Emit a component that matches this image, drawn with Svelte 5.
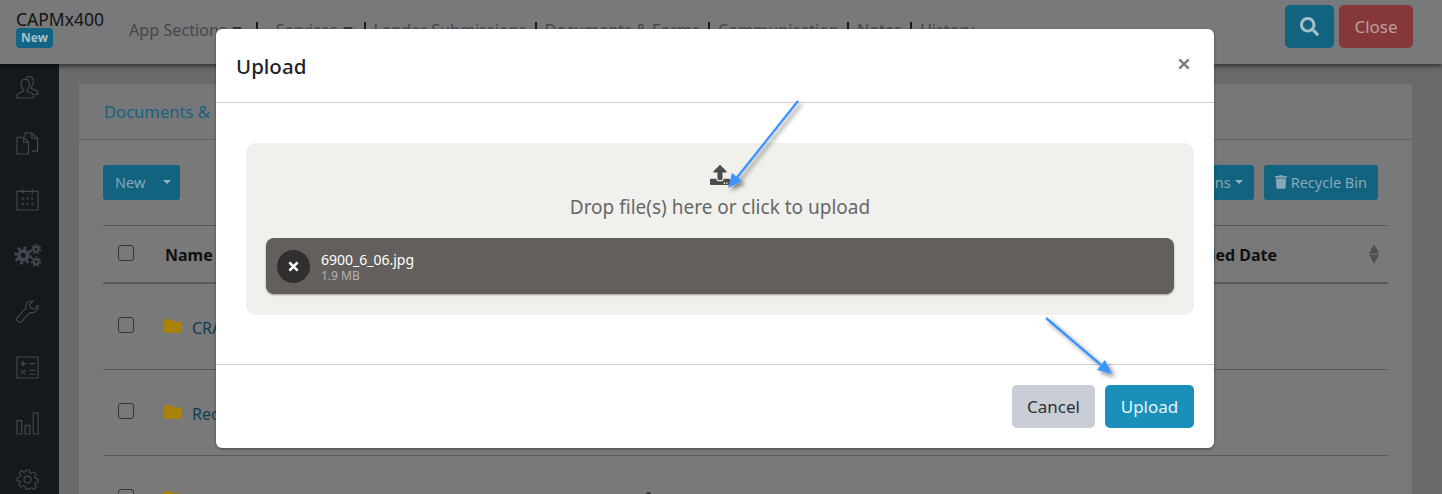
<script lang="ts">
	const navItems = [
		{ label: 'App Sections', caret: true },
		{ label: 'Services', caret: true },
		{ label: 'Lender Submissions' },
		{ label: 'Documents & Forms' },
		{ label: 'Communication' },
		{ label: 'Notes' },
		{ label: 'History' }
	];

	const rows = ['CRA Documents', 'Recent Uploads', 'OUR DEMO FOLDER'];

	const folderPath =
		'M464 128H272l-64-64H48C21.49 64 0 85.49 0 112v288c0 26.51 21.49 48 48 48h416c26.51 0 48-21.49 48-48V176c0-26.51-21.49-48-48-48z';
</script>

<div class="page">
	<header class="topbar">
		<div class="brand">
			<span class="brand-name">CAPMx400</span>
			<span class="badge">New</span>
		</div>
		<nav class="nav">
			{#each navItems as item, i}
				{#if i > 0}<span class="nav-sep"></span>{/if}
				<span class="nav-item" class:has-caret={item.caret}>{item.label}{#if item.caret}<span class="caret-lg"></span>{/if}</span>
			{/each}
		</nav>
		<div class="top-actions">
			<button class="btn-search" aria-label="Search">
				<svg viewBox="0 0 512 512" width="19" height="19">
					<path fill="currentColor" d="M505 442.7L405.3 343c-4.5-4.5-10.6-7-17-7H372c27.6-35.3 44-79.7 44-128C416 93.1 322.9 0 208 0S0 93.1 0 208s93.1 208 208 208c48.3 0 92.7-16.4 128-44v16.3c0 6.4 2.5 12.5 7 17l99.7 99.7c9.4 9.4 24.6 9.4 33.9 0l28.3-28.3c9.4-9.4 9.4-24.6.1-34zM208 336c-70.7 0-128-57.2-128-128 0-70.7 57.2-128 128-128 70.7 0 128 57.2 128 128 0 70.7-57.2 128-128 128z" />
				</svg>
			</button>
			<button class="btn-close">Close</button>
		</div>
	</header>

	<div class="main">
		<aside class="sidebar">
			<!-- users -->
			<svg viewBox="0 0 24 24" class="side-icon">
				<path d="M1 23v-2.500c0-1.500 1-2.300 3-3l3.500-1.300v-2.200c-1.500-1.200-2.200-3-2.200-5.200C5.300 5 7 3.200 9.600 3.200S14 5 14 8.800c0 2.200-.8 4-2.200 5.200v2.200l3.600 1.300c2 .7 3 1.500 3 3V23z" />
				<path d="M11 1.500c.8-.6 1.700-.8 2.800-.8 2.700 0 4.400 1.900 4.400 5.400 0 2.200-.7 3.900-2.100 5v2.200l3.500 1.200c2.200.8 3.400 1.600 3.400 3.100v1.600h-3.500" />
			</svg>
			<!-- documents -->
			<svg viewBox="0 0 24 24" class="side-icon">
				<path d="M1 5.500h7l5 5V23H1z" />
				<path d="M8 5.500v5h5" />
				<path d="M9.500 5V1h7l6 5.500V20H16.500" />
				<path d="M16.500 1v5.500h6" />
			</svg>
			<!-- calendar -->
			<svg viewBox="0 0 24 24" class="side-icon">
				<path d="M1 3.500h22V23H1zM7 1v5M17 1v5" />
				<path class="dots" d="M6 10h2v2H6zM11 10h2v2h-2zM16 10h2v2h-2zM6 16h2v2H6zM11 16h2v2h-2zM16 16h2v2h-2z" />
			</svg>
			<!-- gears -->
			<svg viewBox="0 0 30 24" class="side-icon gears">
				<circle class="gear" cx="10" cy="12" r="6.500" />
				<circle class="gear-teeth" cx="10" cy="12" r="8" />
				<circle class="gear-hole" cx="10" cy="12" r="2.600" />
				<circle class="gear" cx="23.500" cy="5.500" r="3.600" />
				<circle class="gear-teeth small" cx="23.500" cy="5.500" r="4.500" />
				<circle class="gear-hole" cx="23.500" cy="5.500" r="1.500" />
				<circle class="gear" cx="23.500" cy="18.500" r="3.600" />
				<circle class="gear-teeth small" cx="23.500" cy="18.500" r="4.500" />
				<circle class="gear-hole" cx="23.500" cy="18.500" r="1.500" />
			</svg>
			<!-- wrench -->
			<svg viewBox="0 0 24 24" class="side-icon">
				<path d="M15.500 1c-3.700.2-6 3.500-5 7.500L1.200 18.500c-.8.900-.8 2.200 0 3l1.300 1.300c.9.800 2.200.8 3-.1l9.500-9.700c4.200 1 7.800-1.500 8-5.800l-.2-1.400-3.800 3.700-4-1-1-3.800L17.800 1.300z" />
			</svg>
			<!-- calculator -->
			<svg viewBox="0 0 24 24" class="side-icon">
				<path d="M1 1h22v22H1z" />
				<path d="M4.500 8h6M7.500 5v6M14 8h6M5 14.500l5 5M10 14.500l-5 5M14 15h6M14 19h6" />
			</svg>
			<!-- bars -->
			<svg viewBox="0 0 24 24" class="side-icon">
				<path d="M1 9h5v14H1zM9.500 14h5v9h-5zM18 1h5v22h-5z" />
			</svg>
			<!-- settings -->
			<svg viewBox="0 0 24 24" class="side-icon">
				<circle cx="12" cy="12" r="3.600" />
				<path d="M10 1h4l.6 3.200 2 .9 2.700-1.900 2.800 2.800-1.900 2.700.9 2 3.200.6v4l-3.200.6-.9 2 1.900 2.700-2.800 2.800-2.700-1.900-2 .9L14 23h-4l-.6-3.200-2-.9-2.700 1.900-2.800-2.800 1.900-2.700-.9-2L0 14v-4l3.200-.6.9-2L2.200 4.700 5 1.900l2.700 1.900 2-.9z" transform="translate(1.100 1.100) scale(.91)" />
			</svg>
		</aside>

		<section class="card">
			<div class="card-head">
				<span class="card-tab">Documents &amp; Forms</span>
			</div>
			<div class="card-body">
				<div class="toolbar">
					<span class="tb-btn tb-new">New<span class="caret-sm"></span></span>
					<span class="spacer"></span>
					<span class="tb-btn">Actions<span class="caret-sm tight"></span></span>
					<span class="tb-btn">
						<svg viewBox="0 0 448 512" width="12" height="14">
							<path fill="currentColor" d="M432 32H312l-9.400-18.700A24 24 0 0 0 281.100 0H166.800a23.720 23.720 0 0 0-21.400 13.300L136 32H16A16 16 0 0 0 0 48v32a16 16 0 0 0 16 16h416a16 16 0 0 0 16-16V48a16 16 0 0 0-16-16zM53.200 467a48 48 0 0 0 47.900 45h245.800a48 48 0 0 0 47.900-45L416 128H32z" />
						</svg>
						Recycle Bin
					</span>
				</div>
				<div class="table">
					<div class="row head-row">
						<span class="check"></span>
						<span class="col-name">Name</span>
						<span class="col-date">Modified Date</span>
						<svg class="sort" viewBox="0 0 10 20" width="10" height="20">
							<path d="M5 0l5 9.500H0zM5 20l-5-9.500h10z" />
						</svg>
					</div>
					{#each rows as row}
						<div class="row">
							<span class="check"></span>
							<svg class="folder" viewBox="0 0 512 512" width="18" height="18">
								<path fill="currentColor" d={folderPath} />
							</svg>
							<span class="row-link">{row}</span>
							<span class="row-mark"></span>
						</div>
					{/each}
				</div>
			</div>
		</section>
	</div>

	<div class="modal-wrap">
		<div class="modal">
			<div class="modal-header">
				<h5 class="modal-title">Upload</h5>
				<button class="modal-x" aria-label="Close">
					<svg viewBox="0 0 12 12" width="12" height="12">
						<path d="M1.300 1.300l9.400 9.400M10.700 1.300l-9.400 9.400" />
					</svg>
				</button>
			</div>
			<div class="modal-body">
				<div class="dropzone">
					<div class="drop-label">
						<svg viewBox="0 0 512 512" width="20" height="20">
							<path fill="currentColor" d="M296 384h-80c-13.300 0-24-10.700-24-24V192h-87.700c-17.800 0-26.700-21.500-14.100-34.100L242.300 5.700c7.500-7.500 19.800-7.500 27.300 0l152.200 152.200c12.600 12.600 3.700 34.100-14.100 34.100H320v168c0 13.300-10.700 24-24 24zm216-8v112c0 13.300-10.700 24-24 24H24c-13.300 0-24-10.700-24-24V376c0-13.300 10.700-24 24-24h136v8c0 30.900 25.100 56 56 56h80c30.900 0 56-25.100 56-56v-8h136c13.300 0 24 10.700 24 24zm-124 88c0-11-9-20-20-20s-20 9-20 20 9 20 20 20 20-9 20-20zm64 0c0-11-9-20-20-20s-20 9-20 20 9 20 20 20 20-9 20-20z" />
						</svg>
						<span>Drop file(s) here or click to upload</span>
					</div>
					<div class="file-item">
						<span class="file-remove">
							<svg viewBox="0 0 12 12" width="11" height="11">
								<path d="M1.500 1.500l9 9M10.500 1.500l-9 9" />
							</svg>
						</span>
						<div class="file-info">
							<span class="file-name">6900_6_06.jpg</span>
							<span class="file-size">1.9 MB</span>
						</div>
					</div>
				</div>
			</div>
			<div class="modal-footer">
				<button class="btn btn-cancel">Cancel</button>
				<button class="btn btn-upload">Upload</button>
			</div>
		</div>
	</div>

	<!-- annotation arrows drawn on top of the screenshot -->
	<svg class="arrows" viewBox="0 0 1442 494" width="1442" height="494">
		<defs>
			<filter id="arrow-shadow" x="-20%" y="-20%" width="150%" height="150%">
				<feDropShadow dx="3" dy="3" stdDeviation="2" flood-color="#000" flood-opacity="0.45" />
			</filter>
		</defs>
		<g filter="url(#arrow-shadow)">
			<path class="arrow-line" d="M798 101L735 180" />
			<path class="arrow-head" d="M728 188l4-15 10 8z" />
			<path class="arrow-line" d="M1046 318L1101 365" />
			<path class="arrow-head" d="M1112 374l-15-4 8-10z" />
		</g>
	</svg>
</div>

<style>
	:global(body) {
		margin: 0;
	}
	.page {
		position: relative;
		width: 1442px;
		height: 494px;
		overflow: hidden;
		display: flex;
		flex-direction: column;
		background: #6a6a6a;
		font-family: 'Noto Sans', 'Open Sans', sans-serif;
	}
	.topbar {
		height: 64px;
		flex: none;
		display: flex;
		align-items: flex-start;
		padding: 0 29px 0 16px;
		background: #78797b;
		box-shadow: 0 2px 5px rgb(0 0 0 / 0.55);
		position: relative;
		z-index: 1;
	}
	.brand {
		display: flex;
		flex-direction: column;
		align-items: flex-start;
		width: 113px;
		padding-top: 9px;
	}
	.brand-name {
		font-size: 17.500px;
		line-height: 20px;
		color: #141414;
	}
	.badge {
		background: #116484;
		color: #a3c2cf;
		font-size: 12px;
		font-weight: 700;
		line-height: 20px;
		height: 20px;
		padding: 0 5px;
		border-radius: 4px;
		margin-top: -1px;
	}
	.nav {
		display: flex;
		align-items: center;
		gap: 8px;
		padding-top: 18px;
		font-size: 16.200px;
		line-height: 24px;
		color: #46474a;
	}
	.nav-sep {
		width: 2px;
		height: 17px;
		background: #1c1c1c;
	}
	.nav-item {
		display: inline-flex;
		align-items: center;
		white-space: nowrap;
	}
	.nav-item.has-caret {
		margin-right: 6px;
	}
	.nav-item.has-caret + .nav-sep + .nav-item.has-caret {
		margin-left: 10px;
		margin-right: 3px;
	}
	.caret-lg {
		width: 0;
		height: 0;
		margin-left: 5px;
		border-left: 5px solid transparent;
		border-right: 5px solid transparent;
		border-top: 6px solid #333;
	}
	.top-actions {
		margin-left: auto;
		display: flex;
		gap: 5px;
		padding-top: 5px;
	}
	.top-actions button {
		height: 43px;
		border: 0;
		border-radius: 5px;
		padding: 0;
		font: inherit;
		font-size: 17px;
	}
	.btn-search {
		width: 49px;
		background: #11637f;
		color: #a5c0cc;
		display: flex;
		align-items: center;
		justify-content: center;
	}
	.btn-close {
		width: 74px;
		background: #863838;
		color: #bb9fa0;
	}
	.main {
		flex: 1;
		display: flex;
		min-height: 0;
	}
	.sidebar {
		width: 59px;
		flex: none;
		background: #14191e;
		display: flex;
		flex-direction: column;
		align-items: center;
		gap: 33px;
		padding: 12px 5px 0 0;
		box-sizing: border-box;
	}
	.side-icon {
		width: 23px;
		height: 23px;
		flex: none;
		fill: none;
		stroke: #43484e;
		stroke-width: 1.200;
	}
	.side-icon .dots {
		fill: #43484e;
		stroke: none;
	}
	.gears {
		width: 30px;
		margin-left: 2px;
	}
	.side-icon .gear {
		fill: #43484e;
		stroke: none;
	}
	.side-icon .gear-teeth {
		fill: none;
		stroke: #43484e;
		stroke-width: 3;
		stroke-dasharray: 3 3.300;
	}
	.side-icon .gear-teeth.small {
		stroke-width: 1.800;
		stroke-dasharray: 2 2;
	}
	.side-icon .gear-hole {
		fill: #14191e;
		stroke: none;
	}
	.card {
		width: 1335px;
		height: 420px;
		flex: none;
		margin: 19px 0 0 19px;
		box-sizing: border-box;
		background: #797979;
		border: 1px solid #686868;
		border-radius: 4px;
	}
	.card-head {
		height: 56px;
		box-sizing: border-box;
		padding: 0 25px;
		display: flex;
		align-items: center;
		background: #767778;
		border-bottom: 1px solid #636363;
	}
	.card-tab {
		font-size: 16.600px;
		color: #18627f;
	}
	.card-body {
		padding: 25px 24px 0;
	}
	.toolbar {
		display: flex;
		gap: 10px;
		height: 35px;
		margin-bottom: 25px;
		padding-right: 10px;
	}
	.spacer {
		flex: 1;
	}
	.tb-btn {
		display: inline-flex;
		align-items: center;
		gap: 4px;
		padding: 0 11px 2px;
		background: #11637f;
		color: #87a8b6;
		border-radius: 3px;
		font-size: 14.500px;
	}
	.tb-btn.tb-new {
		width: 77px;
		box-sizing: border-box;
		padding-left: 12px;
	}
	.caret-sm {
		width: 0;
		height: 0;
		margin-left: 14px;
		border-left: 4px solid transparent;
		border-right: 4px solid transparent;
		border-top: 4px solid #95b2be;
	}
	.caret-sm.tight {
		margin-left: 0;
	}
	.table {
		width: 1285px;
		border-top: 1px solid #5a5a5a;
	}
	.row {
		display: flex;
		align-items: center;
		height: 86px;
		box-sizing: border-box;
		border-bottom: 1px solid #5a5a5a;
		padding-left: 15px;
	}
	.head-row {
		height: 58px;
		border-bottom-width: 2px;
		font-size: 16px;
		font-weight: 700;
		color: #101010;
	}
	.head-row .col-name,
	.head-row .col-date {
		padding-top: 2px;
	}
	.check {
		width: 14px;
		height: 14px;
		flex: none;
		border: 1px solid #363636;
		border-radius: 3px;
		margin: -3px 30px 0 0;
	}
	.col-name {
		margin-left: 1px;
	}
	.col-date {
		margin-left: auto;
		white-space: nowrap;
	}
	.sort {
		flex: none;
		margin: 0 9px 0 92px;
		fill: #505050;
	}
	.folder {
		flex: none;
		color: #a98207;
		margin: -2px 10px 0 0;
	}
	.row-link {
		flex: none;
		width: 452px;
		padding-top: 2px;
		font-size: 16px;
		color: #0f3d52;
		white-space: nowrap;
	}
	.row:last-child .row-link {
		width: 448px;
		margin-left: 4px;
	}
	.row-mark {
		display: none;
		width: 5px;
		height: 14px;
		margin-left: 2px;
		border-radius: 3px 3px 0 0;
		background: #333;
	}
	.row:last-child .row-mark {
		display: block;
	}
	.modal-wrap {
		position: absolute;
		left: 216px;
		top: 29px;
		z-index: 2;
	}
	.modal {
		width: 998px;
		height: 419px;
		background: #fff;
		border-radius: 6px;
		box-shadow: 0 1px 3px rgb(0 0 0 / 0.4);
		display: flex;
		flex-direction: column;
		color: #212529;
	}
	.modal-header {
		height: 74px;
		flex: none;
		box-sizing: border-box;
		display: flex;
		align-items: center;
		justify-content: space-between;
		padding: 0 24px 0 20px;
		border-bottom: 1px solid #cfcfcf;
	}
	.modal-title {
		margin: 0;
		font-size: 20.500px;
		font-weight: 500;
		line-height: 30px;
	}
	.modal-x {
		background: none;
		border: 0;
		padding: 0;
		display: flex;
		margin-top: -3px;
	}
	.modal-x path {
		stroke: #808080;
		stroke-width: 2.600;
		fill: none;
	}
	.modal-body {
		flex: 1;
		padding: 40px 20px 0 30px;
		box-sizing: border-box;
	}
	.dropzone {
		width: 948px;
		height: 172px;
		box-sizing: border-box;
		background: #f0f0ed;
		border-radius: 10px;
		padding: 22px 20px 0;
		color: #676767;
	}
	.drop-label {
		height: 73px;
		display: flex;
		flex-direction: column;
		align-items: center;
		gap: 9px;
		font-size: 19px;
		line-height: 26px;
	}
	.drop-label svg {
		color: #4c4c4c;
	}
	.file-item {
		width: 908px;
		height: 56px;
		box-sizing: border-box;
		display: flex;
		align-items: center;
		gap: 11px;
		padding: 0 11px;
		background: #645f5c;
		border-radius: 8px;
		box-shadow: 0 1px 2px rgb(0 0 0 / 0.35);
		color: #fff;
	}
	.file-remove {
		width: 33px;
		height: 33px;
		border-radius: 50%;
		background: #312f2d;
		display: flex;
		align-items: center;
		justify-content: center;
	}
	.file-remove path {
		stroke: #fff;
		stroke-width: 2.800;
		fill: none;
	}
	.file-info {
		display: flex;
		flex-direction: column;
		margin-top: 0;
	}
	.file-name {
		font-size: 14px;
		line-height: 19px;
	}
	.file-size {
		font-size: 12px;
		line-height: 14px;
		color: #b5b2af;
	}
	.modal-footer {
		height: 84px;
		flex: none;
		box-sizing: border-box;
		border-top: 1px solid #cfcfcf;
		display: flex;
		justify-content: flex-end;
		gap: 10px;
		padding: 20px 20px 0 0;
	}
	.btn {
		height: 43px;
		border: 0;
		border-radius: 5px;
		font: inherit;
		font-size: 17px;
		padding: 0;
	}
	.btn-cancel {
		width: 83px;
		background: #c9cdd5;
		color: #2c3038;
	}
	.btn-upload {
		width: 89px;
		background: #1a8fba;
		color: #e6f8ff;
	}
	.arrows {
		position: absolute;
		inset: 0;
		z-index: 3;
		pointer-events: none;
	}
	.arrow-line {
		stroke: #3d94ff;
		stroke-width: 2.400;
		fill: none;
	}
	.arrow-head {
		fill: #3d94ff;
	}
</style>
